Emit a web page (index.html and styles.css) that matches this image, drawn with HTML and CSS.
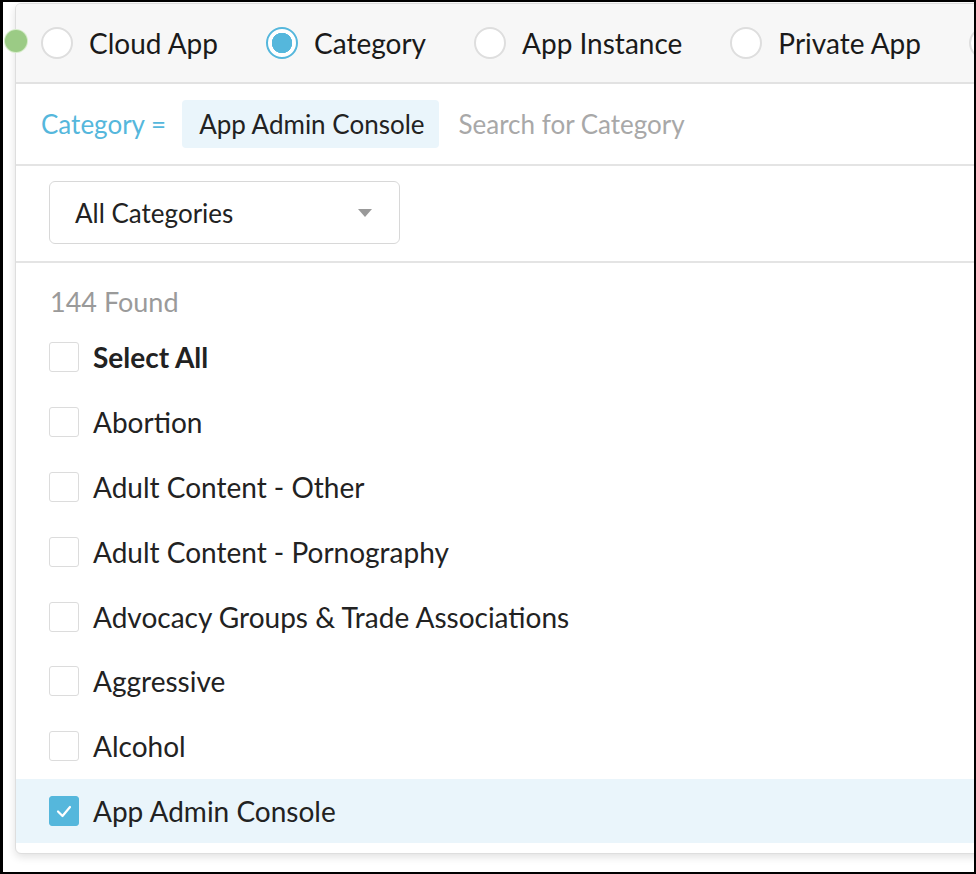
FILE: index.html
```html
<!DOCTYPE html>
<html>
<head>
<meta charset="utf-8">
<link rel="stylesheet" href="styles.css">
</head>
<body>
<div class="frame">
  <span class="status-dot"></span>
  <div class="panel">
    <div class="tabs">
      <label class="radio-item"><span class="radio"></span><span>Cloud App</span></label>
      <label class="radio-item"><span class="radio checked"></span><span>Category</span></label>
      <label class="radio-item"><span class="radio"></span><span>App Instance</span></label>
      <label class="radio-item"><span class="radio"></span><span>Private App</span></label>
      <label class="radio-item"><span class="radio"></span></label>
    </div>
    <div class="filter-row">
      <span class="filter-label">Category =</span>
      <span class="chip">App Admin Console</span>
      <span class="placeholder">Search for Category</span>
    </div>
    <div class="select-row">
      <div class="select">
        <span>All Categories</span>
        <span class="caret"></span>
      </div>
    </div>
    <div class="list">
      <div class="found">144 Found</div>
      <div class="row"><span class="box"></span><span class="bold">Select All</span></div>
      <div class="row"><span class="box"></span><span>Abortion</span></div>
      <div class="row"><span class="box"></span><span>Adult Content - Other</span></div>
      <div class="row"><span class="box"></span><span>Adult Content - Pornography</span></div>
      <div class="row"><span class="box"></span><span>Advocacy Groups &amp; Trade Associations</span></div>
      <div class="row"><span class="box"></span><span>Aggressive</span></div>
      <div class="row"><span class="box"></span><span>Alcohol</span></div>
      <div class="row selected"><span class="box checked"><svg width="20" height="20" viewBox="0 0 20 20"><polyline points="4,10.5 8.5,15 16,6" fill="none" stroke="#fff" stroke-width="2.2" stroke-linecap="round" stroke-linejoin="round"/></svg></span><span>App Admin Console</span></div>
    </div>
  </div>
</div>
</body>
</html>
```

FILE: styles.css
```css
html, body {
  margin: 0;
  padding: 0;
  background: #fff;
}
body {
  font-family: Lato, "Open Sans", sans-serif;
  color: #222;
}
.frame {
  position: relative;
  width: 976px;
  height: 874px;
  box-sizing: border-box;
  border-style: solid;
  border-color: #000;
  border-width: 2px 2px 2px 3px;
  overflow: hidden;
  background: #fff;
}
.status-dot {
  position: absolute;
  left: 2px;
  top: 28px;
  width: 22px;
  height: 22px;
  border-radius: 50%;
  background: #9bcb85;
  box-shadow: 0 0 0 1px #d4ebc8;
  z-index: 2;
}
.panel {
  margin: 1px 0 0 12px;
  width: 1100px;
  background: #fff;
  border: 1px solid #dedede;
  border-radius: 6px;
  box-shadow: 0 3px 8px rgba(0,0,0,0.12);
  overflow: hidden;
}
.tabs {
  display: flex;
  align-items: center;
  gap: 48px;
  height: 78px;
  padding-left: 25px;
  background: #f7f7f7;
  border-bottom: 2px solid #e2e2e2;
  white-space: nowrap;
}
.radio-item {
  display: flex;
  align-items: center;
  gap: 16px;
  font-size: 28px;
  line-height: 32px;
  color: #1a1a1a;
}
.radio {
  width: 28px;
  height: 28px;
  border-radius: 50%;
  border: 2px solid #dedede;
  background: #fff;
  flex: none;
}
.radio.checked {
  border-color: #55b7dc;
  background: radial-gradient(circle, #55b7dc 0 10px, #fff 10.5px);
}
.filter-row {
  display: flex;
  align-items: center;
  height: 80px;
  padding-left: 25px;
  border-bottom: 2px solid #e4e4e4;
  font-size: 26px;
  white-space: nowrap;
}
.filter-label {
  color: #55b7dc;
  margin-right: 16px;
}
.chip {
  background: #eaf5fb;
  border-radius: 4px;
  padding: 0 14px 0 17px;
  height: 48px;
  line-height: 48px;
  color: #222;
  margin-right: 20px;
}
.placeholder {
  color: #a8a8a8;
}
.select-row {
  padding: 15px 0 17px 33px;
  border-bottom: 2px solid #e4e4e4;
}
.select {
  width: 351px;
  height: 63px;
  box-sizing: border-box;
  border: 1px solid #d8d8d8;
  border-radius: 6px;
  display: flex;
  align-items: center;
  justify-content: space-between;
  padding: 0 27px 0 25px;
  font-size: 26px;
  color: #222;
}
.caret {
  width: 0;
  height: 0;
  border-left: 7.5px solid transparent;
  border-right: 7.5px solid transparent;
  border-top: 8px solid #999;
}
.list {
  padding: 24px 0 10px 0;
}
.found {
  font-size: 27px;
  color: #9a9a9a;
  line-height: 30px;
  padding-left: 34px;
  margin-bottom: 8px;
}
.row {
  display: flex;
  align-items: center;
  height: 64.8px;
  padding-left: 33px;
  gap: 14px;
  font-size: 28px;
  white-space: nowrap;
}
.row.selected {
  background: #eaf5fb;
}
.bold {
  font-weight: 700;
}
.box {
  width: 28px;
  height: 28px;
  border: 1px solid #dcdcdc;
  border-radius: 3px;
  background: #fff;
  flex: none;
  display: flex;
  align-items: center;
  justify-content: center;
}
.box.checked {
  background: #55b7dc;
  border-color: #55b7dc;
}
```
